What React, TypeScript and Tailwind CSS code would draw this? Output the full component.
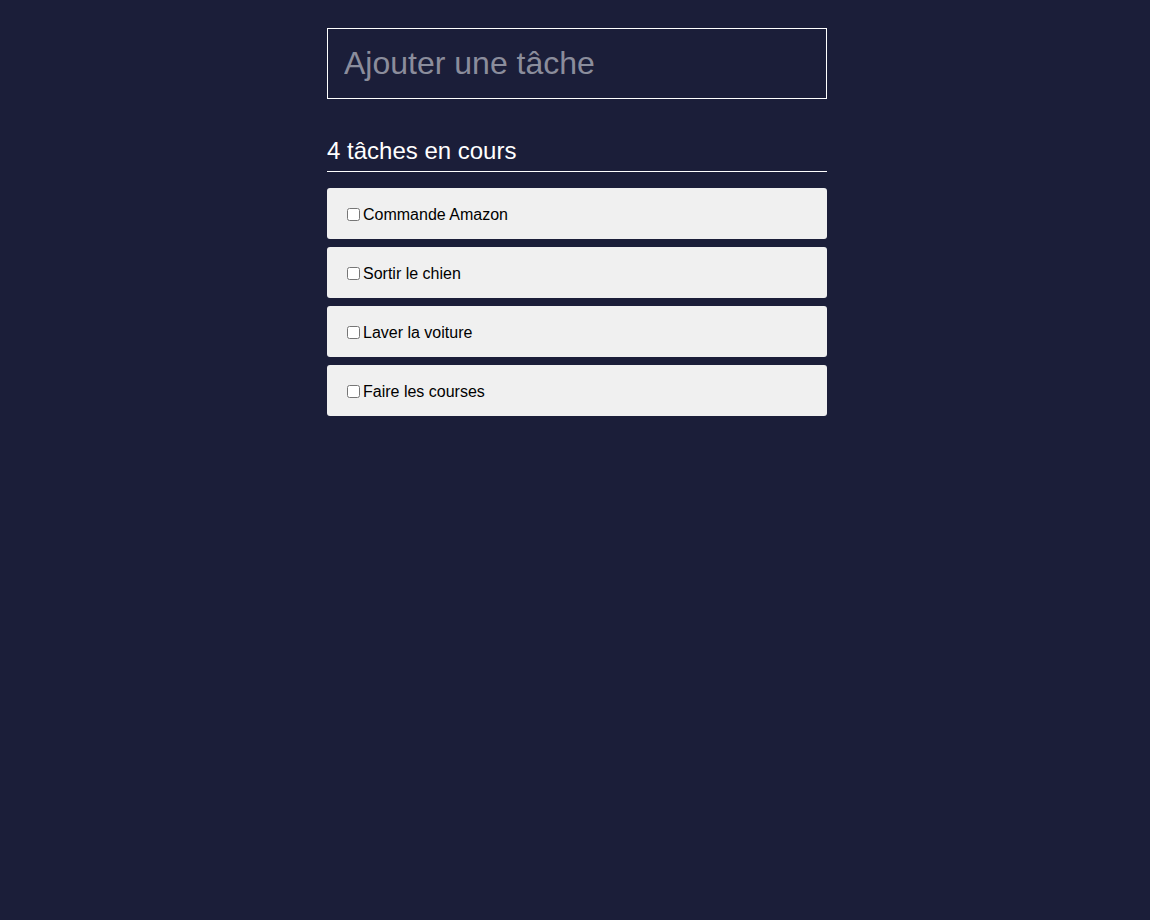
import React from 'react';

const tasks = ['Commande Amazon', 'Sortir le chien', 'Laver la voiture', 'Faire les courses'];

export default function App() {
  return (
    <div className="min-h-screen bg-[#1b1e39] pt-[28px] pl-[4px] font-['Liberation_Sans',Arial,sans-serif]">
      <div className="mx-auto w-[500px]">
        {/* Add task input */}
        <input
          type="text"
          placeholder="Ajouter une tâche"
          className="block h-[71px] w-full border border-white bg-transparent px-4 text-[32px] text-white outline-none placeholder:text-[#8b8d9c]"
        />

        {/* Task list header */}
        <h2 className="mt-[38px] border-b border-white pb-[6px] text-[24px] leading-[28px] text-white">
          {tasks.length} tâches en cours
        </h2>

        <ul className="mt-4 flex flex-col gap-2">
          {tasks.map((t) => (
            <li key={t} className="flex h-[51px] items-center rounded-[3px] bg-[#f0f0f0] pl-5 pt-[2px] text-[16px] text-black">
              <input type="checkbox" className="mr-[3px] h-[13px] w-[13px]" />
              <span>{t}</span>
            </li>
          ))}
        </ul>
      </div>
    </div>
  );
}
